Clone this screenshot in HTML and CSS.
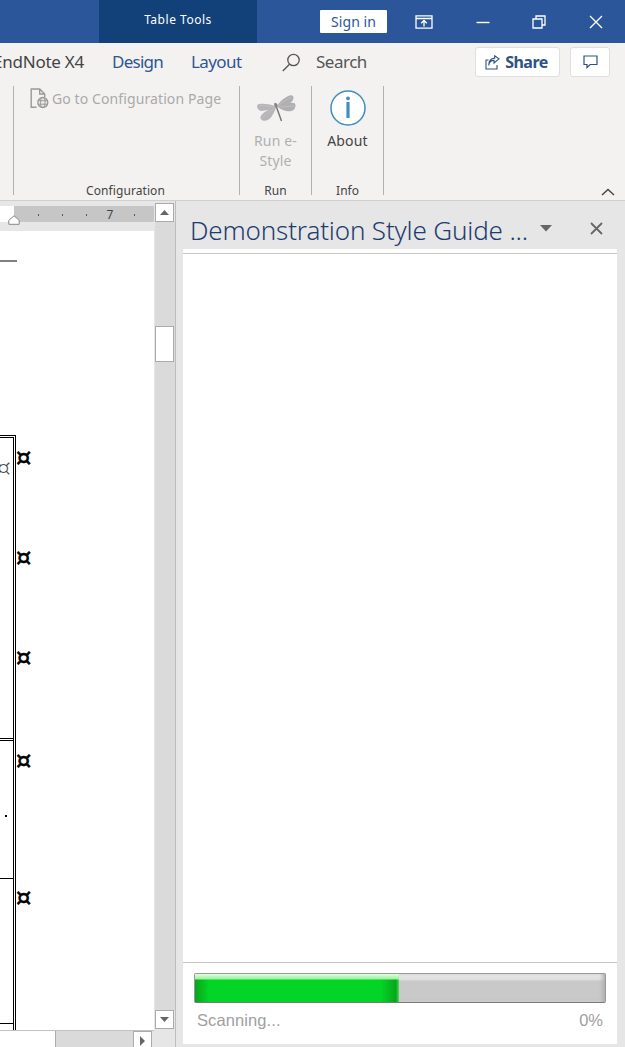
FILE: index.html
```html
<!DOCTYPE html>
<html lang="en">
<head>
<meta charset="utf-8">
<title>Table Tools</title>
<link rel="stylesheet" href="styles.css">
</head>
<body>
<div class="app">
  <header class="titlebar">
    <div class="context-tab"><span>Table Tools</span></div>
    <button class="sign-in">Sign in</button>
    <svg class="win-icon i-ribbon" width="18" height="14" viewBox="0 0 18 14" fill="none" stroke="#fff"><path d="M1 .8h16v12.4H1zM1 3.5h16M9 11.5V5.5M6.2 8.2L9 5.5l2.8 2.7" stroke-width="1.3"/></svg>
    <svg class="win-icon i-min" width="14" height="14" viewBox="0 0 14 14" stroke="#fff"><path d="M.5 7.5h13" stroke-width="1.4"/></svg>
    <svg class="win-icon i-restore" width="14" height="14" viewBox="0 0 14 14" fill="none" stroke="#fff" stroke-width="1.3"><path d="M1 4h9v9H1zM4 4V1h9v9h-3"/></svg>
    <svg class="win-icon i-close" width="14" height="14" viewBox="0 0 14 14" stroke="#fff" stroke-width="1.4"><path d="M1 1l12 12M13 1L1 13"/></svg>
  </header>
  <nav class="tabs">
    <span class="tab endnote">EndNote X4</span>
    <span class="tab design">Design</span>
    <span class="tab layout">Layout</span>
    <svg class="search-icon" width="19" height="19" viewBox="0 0 19 19" fill="none" stroke="#555" stroke-width="1.3"><circle cx="11.5" cy="7" r="5.7"/><path d="M7.5 11.2L.8 18"/></svg>
    <span class="tab search">Search</span>
    <button class="share"><svg width="15" height="15" viewBox="0 0 15 15" fill="none" stroke="#2e5286"><path d="M3.500 5H1v9h11v-4M3.800 10.500C4 7 6 5.400 9 5.400V8l5-4.100L9.700.8v2.300C6 3.400 3.700 6 3.800 10.500z" stroke-width="1.100"/></svg><span>Share</span></button>
    <button class="comment"><svg width="15" height="14" viewBox="0 0 15 14" fill="none" stroke="#2e5286" stroke-width="1.200"><path d="M1 1h13v8.500H7.200L4 12.500v-3H1z"/></svg></button>
  </nav>
  <section class="ribbon">
    <div class="group lead"></div>
    <div class="group config">
      <div class="config-link">
        <svg width="19" height="21" viewBox="0 0 19 21" fill="none" stroke="#999"><path d="M6.500 19.300H1.200V1h8.500l5 5v3M9.700 1v5h5" stroke-width="1.400"/><circle cx="12.800" cy="14.500" r="5" fill="#e9e9e9" stroke-width="1.300"/><ellipse cx="12.800" cy="14.500" rx="2.300" ry="5"/><path d="M8 12.700h9.600M8 16.200h9.600"/></svg>
        <span>Go to Configuration Page</span>
      </div>
      <span class="group-name n-config">Configuration</span>
    </div>
    <div class="group run">
      <svg class="big-icon dragonfly" width="40" height="28" viewBox="0 0 40 28"><path d="M20.500 12.500C15 10 4 8.500 1.500 10.700.3 13 2 16.500 5.500 17l8-1.300C8 17.500 3 22 4.800 25c2.500 3.500 8.500 1.500 11.200-3 2.700-4.300 4.500-9.500 4.500-9.500z" fill="#b6b5b8"/><path d="M20.500 12.500C23 8 31 .8 35.500 1.200c3.500.6 2 6-1.500 7.800 3-.8 5.500-.4 5.500 2.200-.2 5-4 6.600-8 6C27 16.500 23 14 20.500 12.500z" fill="#b0afb2"/><path d="M19 13L3 11M19 14L6 24M21 12L35 3M22 13l16-1" stroke="#bfbec1" fill="none"/><path d="M19 9l2 5.500L25.500 27" stroke="#77767a" stroke-width="1.500" fill="none"/><circle cx="19.800" cy="11" r="1.700" fill="#858487"/></svg>
      <span class="label disabled">Run e-<br>Style</span>
      <span class="group-name">Run</span>
    </div>
    <div class="group info">
      <svg class="big-icon" width="38" height="38" viewBox="0 0 38 38"><circle cx="19" cy="19" r="17" fill="#fff" stroke="#408fc0" stroke-width="1.500"/><path d="M19 13v16" stroke="#408fc0" stroke-width="3.200"/><circle cx="19" cy="9.300" r="1.900" fill="#408fc0"/></svg>
      <span class="label">About</span>
      <span class="group-name">Info</span>
    </div>
    <svg class="collapse" width="14" height="8" viewBox="0 0 14 8" fill="none" stroke="#444" stroke-width="1.400"><path d="M1 7l6-5.500L13 7"/></svg>
  </section>
  <main class="workspace">
    <section class="editor">
      <div class="ruler">
        <span class="ruler-page"></span>
        <div class="ticks"><i></i><i></i><i></i><b>7</b><i></i></div>
        <svg class="indent" width="12" height="10" viewBox="0 0 12 10"><path d="M.8 9.300V5.300L6 .8l5.200 4.500v4z" fill="#fff" stroke="#888"/></svg>
      </div>
      <div class="page">
        <div class="rule"></div>
        <div class="sheet">
          <div class="table">
            <div class="cell c1"><span>¤</span></div>
            <div class="cell c2"><span></span></div>
            <div class="cell c3"></div>
            <div class="cell"></div>
          </div>
          <div class="marks"><span>¤</span><span>¤</span><span>¤</span><span>¤</span><span>¤</span></div>
        </div>
      </div>
      <div class="hscroll"><span class="hthumb"></span><span class="htrack"></span><span class="arrow-box"><svg width="5" height="10" viewBox="0 0 5 10"><path d="M0 0l5 5-5 5z" fill="#666"/></svg></span></div>
    </section>
    <div class="vscroll">
      <span class="arrow-box"><svg width="9" height="5" viewBox="0 0 9 5"><path d="M0 5l4.500-5L9 5z" fill="#666"/></svg></span>
      <div class="vtrack"><span class="vthumb"></span></div>
      <span class="arrow-box"><svg width="9" height="5" viewBox="0 0 9 5"><path d="M0 0l4.500 5L9 0z" fill="#666"/></svg></span>
    </div>
    <aside class="pane">
      <div class="pane-head">
        <h1>Demonstration Style Guide ...</h1>
        <svg class="caret" width="12" height="7" viewBox="0 0 12 7"><path d="M0 0h12L6 6.500z" fill="#666"/></svg>
        <svg class="pane-close" width="13" height="13" viewBox="0 0 13 13" stroke="#666" stroke-width="1.800"><path d="M1 1l11 11M12 1L1 12"/></svg>
      </div>
      <div class="pane-body">
        <div class="results"></div>
        <div class="status">
          <div class="progress"><div class="bar"></div></div>
          <div class="status-text"><span class="scan">Scanning...</span><span class="pct">0%</span></div>
        </div>
      </div>
    </aside>
  </main>
</div>
</body>
</html>
```

FILE: styles.css
```css
* { box-sizing: border-box; }
body { margin: 0; font-family: "Noto Sans", "Open Sans", sans-serif; color: #444; }
button { font: inherit; border: 0; padding: 0; display: flex; align-items: center; justify-content: center; }
svg { display: block; flex: none; }
span { white-space: nowrap; }
.app { width: 625px; height: 1047px; overflow: hidden; display: grid; grid-template-rows: 43px 38px 120px 1fr; background: #f3f2f1; }

.titlebar { background: #2b579a; display: flex; align-items: center; }
.context-tab { margin-left: 99px; width: 158px; height: 43px; background: #124078; color: #fff; font-size: 12px; line-height: 39px; text-align: center; letter-spacing: .52px; }
.sign-in { margin-left: 63px; width: 67px; height: 23px; background: #fff; color: #2b579a; font-size: 14px; border-radius: 1px; letter-spacing: .05px; }
.i-ribbon { margin-left: 28px; }
.i-min { margin-left: 43px; }
.i-restore { margin-left: 42px; }
.i-close { margin-left: 43px; }

.tabs { display: flex; align-items: center; font-size: 17px; }
.tab { flex: none; line-height: 38px; }
.endnote { width: 84px; display: flex; justify-content: flex-end; letter-spacing: -.25px; }
.design { margin-left: 28px; width: 79px; color: #2f5592; letter-spacing: -.75px; }
.layout { width: 91px; color: #2f5592; letter-spacing: -.6px; }
.search { margin-left: 15px; width: 159px; letter-spacing: -.5px; color: #555; }
.share, .comment { height: 30px; background: #fff; border: 1px solid #e1dfdd; border-radius: 3px; color: #2e5286; }
.share { width: 85px; gap: 5px; padding-right: 2px; font-size: 16px; font-weight: 700; letter-spacing: -.5px; }
.comment { width: 40px; margin-left: 10px; }

.ribbon { display: flex; border-bottom: 1px solid #cfcfcf; }
.group { height: 109px; margin-top: 5px; border-right: 1px solid #b1b1b1; display: flex; flex-direction: column; align-items: center; }
.lead { width: 14px; }
.config { width: 226px; }
.run, .info { width: 72px; }
.config-link { align-self: flex-start; margin-left: 16px; margin-top: 2px; display: flex; align-items: flex-start; gap: 3px; color: #aaa; font-size: 14px; line-height: 21px; letter-spacing: .1px; }
.big-icon { margin-top: 3px; height: 38px; }
.label { font-size: 14px; line-height: 20px; margin-top: 4px; text-align: center; letter-spacing: .15px; }
.disabled { color: #b0b0b0; }
.group-name { margin-top: auto; font-size: 12px; line-height: 18px; margin-bottom: -5px; }
.n-config { letter-spacing: .08px; margin-right: 2px; }
.collapse { margin: 107px 0 0 217px; }

.workspace { display: grid; grid-template-columns: 154px 22px 1fr; min-height: 0; }
.editor { display: grid; grid-template-rows: 30px 799px 1fr; background: #e6e6e6; min-width: 0; }
.ruler { position: relative; display: flex; padding-top: 5px; height: 21px; }
.ruler-page { width: 14px; background: #fff; }
.ticks { flex: 1; background: #c6c6c6; display: flex; align-items: center; padding-left: 12px; }
.ticks i { width: 1px; height: 2px; margin: 2px 11.500px 0; background: #555; flex: none; }
.ticks b { font-size: 12px; font-weight: 400; line-height: 16px; width: 24px; text-align: center; padding-top: 2px; }
.indent { position: absolute; left: 8px; top: 14px; }
.page { background: #fff; overflow: hidden; display: grid; grid-template-rows: 204px 1fr; }
.rule { width: 17px; height: 2px; background: #808080; margin-top: 29px; }
.sheet { display: flex; }
.table { width: 16px; height: 595px; border: solid #000; border-width: 3px 3px 0 0; border-style: double; border-left: 0; border-bottom: 0; display: grid; grid-template-rows: 303px 138px 145px 1fr; }
.cell { border-bottom: 1px solid #000; overflow: hidden; }
.c1 { border-bottom: 3px double #000; display: flex; justify-content: flex-end; align-items: flex-start; padding: 18px 2px 0 0; font: 200 24px/24px "DejaVu Sans", sans-serif; color: #444; }
.c2 { padding: 74px 0 0 5px; }
.c2 span { display: block; width: 2px; height: 2px; background: #000; }
.cell:last-child { border: 0; }
.marks { margin-left: 0; display: grid; grid-template-rows: 100px 100px 103px 137px 100px; font: 24px/24px "DejaVu Sans", sans-serif; -webkit-text-stroke: .6px #000; color: #000; padding-top: 11px; }
.hscroll { border-top: 1px solid #c2c2c2; height: 17px; display: flex; }
.hthumb { width: 56px; background: #fff; border-right: 1px solid #ababab; }
.htrack { width: 77px; background: #dadada; }
.hscroll .arrow-box { height: 19px; flex: none; }
.arrow-box { background: #fff; border: 1px solid #ababab; display: flex; align-items: center; justify-content: center; width: 19px; height: 19px; }
.vscroll { background: #e6e6e6; border-right: 1px solid #bdbdbd; display: grid; grid-template-rows: 19px 788px 19px; padding: 2px 0 0 1px; }
.vtrack { background: #dadada; padding-top: 104px; }
.vthumb { display: block; width: 19px; height: 36px; background: #fff; border: 1px solid #ababab; }

.pane { background: #e6e6e6; padding: 0 8px 3px 7px; display: grid; grid-template-rows: 48px 1fr; }
.pane-head { display: flex; align-items: flex-start; }
h1 { margin: 0 0 0 7px; width: 350px; white-space: nowrap; font: 300 26px/59px "Noto Sans", "Open Sans", sans-serif; letter-spacing: -.16px; color: #1e3d6f; }
.caret { margin-top: 24px; }
.pane-close { margin: 21px 0 0 38px; }
.pane-body { background: #fff; padding-top: 4px; display: grid; grid-template-rows: 709px 1fr; }
.results { border-top: 1px solid #c6c6c6; }
.status { border-top: 1px solid #c6c6c6; padding: 10px 11px 0; }
.progress { height: 30px; border: 1px solid #999; border-bottom-color: #7a7a7a; border-radius: 2px; background: linear-gradient(#eee, #dcdcdc 6px, #c9c9c9 7px, #c9c9c9 26px, #ddd); box-shadow: inset -3px 0 4px -1px #aaa; }
.bar { width: 204px; height: 28px; background: linear-gradient(#dfffe0, #9df09d 5px, transparent 6px), linear-gradient(90deg, #08a51c, #02d526 14px, #02d526 186px, #08a51c 201px, #43e05a); }
.status-text { display: flex; justify-content: space-between; padding: 0 3px; font: 16.500px/35px "Liberation Sans", sans-serif; color: #a0a0a0; }
.scan { letter-spacing: .1px; }
```
